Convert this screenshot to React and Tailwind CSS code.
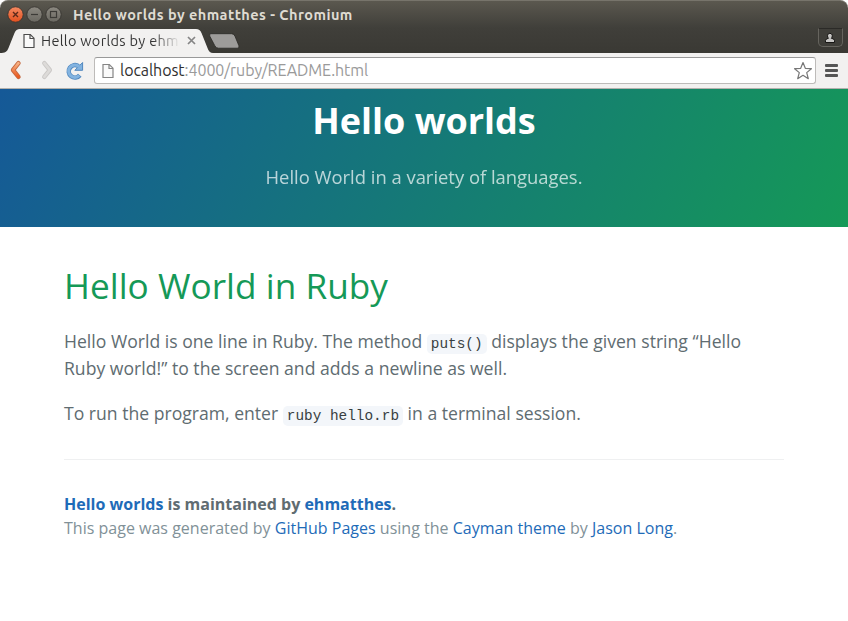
import React from "react";

const uiFont = "font-['Ubuntu','Noto_Sans',sans-serif]";

function WindowButton({ close, children }) {
  return (
    <svg width="17" height="18" viewBox="0 0 17 18" className="shrink-0">
      <defs>
        <linearGradient id="closeFill" x1="0" y1="0" x2="0" y2="1">
          <stop offset="0" stopColor="#f58a62" />
          <stop offset="1" stopColor="#e2501f" />
        </linearGradient>
        <linearGradient id="grayFill" x1="0" y1="0" x2="0" y2="1">
          <stop offset="0" stopColor="#8c8981" />
          <stop offset="1" stopColor="#6a6861" />
        </linearGradient>
      </defs>
      <circle cx="8.5" cy="8.5" r="7.7" fill={close ? "url(#closeFill)" : "url(#grayFill)"} stroke="#33312d" strokeWidth="0.8" />
      {children}
    </svg>
  );
}

function TitleBar() {
  return (
    <div className="flex h-7 items-center rounded-t-lg border-t border-[#77746b] bg-linear-to-b from-[#5b584f] to-[#403f3a] pl-[7px]">
      <div className="flex gap-[2px]">
        <WindowButton close>
          <path d="M6 6l5 5M11 6l-5 5" stroke="#5b291a" strokeWidth="1.4" />
        </WindowButton>
        <WindowButton>
          <path d="M5 8.500h7" stroke="#3c3b37" strokeWidth="1.2" />
        </WindowButton>
        <WindowButton>
          <rect x="5.5" y="5.5" width="6" height="6" fill="none" stroke="#3c3b37" strokeWidth="1.2" />
        </WindowButton>
      </div>
      <h1 className="ml-[11px] whitespace-nowrap text-[14.5px] leading-7 font-bold tracking-[0.45px] text-[#dfdbd2]">
        Hello worlds by ehmatthes - Chromium
      </h1>
    </div>
  );
}

function PageIcon({ color }) {
  return (
    <svg width="12" height="16" viewBox="0 0 12 16" className="shrink-0">
      <path d="M1 1.5h6.3L11 5.2v9.3H1z" fill="#fafafa" stroke={color} strokeWidth="1.2" />
      <path d="M7 1.5v4h4" fill="none" stroke={color} strokeWidth="1.2" />
    </svg>
  );
}

function TabStrip() {
  return (
    <div className="flex h-[25px] bg-linear-to-b from-[#403f3a] to-[#3a3934]">
      <div className="relative flex h-[25px] w-[216px] items-center pl-[23px]">
        <svg className="absolute inset-0" width="216" height="25" viewBox="0 0 216 25">
          <path d="M0 25C5 25 7 24 8.500 20L14.500 5Q16 1 20 1H196Q200 1 201.500 5L207.500 20Q209 25 213 25Z" fill="#f2f1f0" />
        </svg>
        <div className="relative flex items-center">
          <PageIcon color="#4c4c4c" />
          <span className="ml-[6px] h-[22px] w-[139px] overflow-hidden whitespace-nowrap bg-linear-to-r from-[#333] from-80% to-[#f2f1f0] bg-clip-text text-[14.5px] leading-[22px] tracking-[0.3px] text-transparent">
            Hello worlds by ehm
          </span>
          <svg width="9" height="9" viewBox="0 0 9 9" className="ml-[7px]">
            <path d="M1 1l7 7M8 1l-7 7" stroke="#858585" strokeWidth="1.7" />
          </svg>
        </div>
      </div>
      <svg width="33" height="25" viewBox="0 0 33 25" className="-ml-[8px]">
        <path d="M3 5.700H23.500Q26 5.700 27 8.200L30.800 17.500Q31.800 20.200 29.300 20.200H12Q9.500 20.200 8.300 17.700L1.500 8.200Q.8 5.700 3 5.700Z" fill="none" />
        <path d="M3 5.700H23.500Q26 5.700 27 8.200L30.800 17.500Q31.800 20.200 29.300 20.200H10.500Q8 20.200 6.800 17.700L1.800 8.200Q.8 5.700 3 5.700Z" fill="#9d9c9a" stroke="#292825" strokeWidth=".8" />
      </svg>
      <div className="mr-[5px] ml-auto flex h-[19px] w-[25px] justify-center rounded-b-[5px] border border-[#66645e] border-t-[#2b2a27] bg-[#3f3e39] pt-[3px]">
        <svg width="12" height="12" viewBox="0 0 12 12" className="-ml-px">
          <path d="M1.500 10.500V8.500Q2 6.500 4.500 6.300Q3.500 5.500 3.500 3.700A2.400 2.400 0 0 1 8.300 3.700Q8.300 5.500 7.300 6.300Q10 6.500 10.500 8.500V10.500Z" fill="#c8c7c5" stroke="#171614" strokeWidth="1" />
        </svg>
      </div>
    </div>
  );
}

function Toolbar() {
  return (
    <div className="flex h-9 items-center border-b border-[#b3b1ad] bg-[#f2f1f0] pl-[9px]">
      <svg width="13" height="20" viewBox="0 0 13 20" className="-mt-[2px]">
        <defs>
          <linearGradient id="backFill" x1="0" y1="0" x2="0" y2="1">
            <stop offset="0" stopColor="#f8b183" />
            <stop offset="1" stopColor="#ea5a20" />
          </linearGradient>
        </defs>
        <path d="M9.500 3.200L4 10l5.500 6.800" fill="none" stroke="#c4683f" strokeWidth="4.400" strokeLinecap="round" strokeLinejoin="round" />
        <path d="M9.500 3.200L4 10l5.500 6.800" fill="none" stroke="url(#backFill)" strokeWidth="2.700" strokeLinecap="round" strokeLinejoin="round" />
      </svg>
      <svg width="13" height="20" viewBox="0 0 13 20" className="-mt-[2px] ml-[18px]">
        <path d="M4.300 3.200l5.500 6.800-5.500 6.800" fill="none" stroke="#cac8c6" strokeWidth="4.400" strokeLinecap="round" strokeLinejoin="round" />
        <path d="M4.300 3.200l5.500 6.800-5.500 6.800" fill="none" stroke="#dddbd9" strokeWidth="2.700" strokeLinecap="round" strokeLinejoin="round" />
      </svg>
      <svg width="20" height="20" viewBox="0 0 20 20" className="ml-[12px]">
        <path d="M13.500 5.200A6.200 6.200 0 1 0 14.800 14.200" fill="none" stroke="#5288be" strokeWidth="4.600" />
        <path d="M17.600 1.500V9.300H9.800Z" fill="#82b3e0" stroke="#5288be" strokeWidth="1" strokeLinejoin="round" />
        <path d="M14 5.600A6.200 6.200 0 1 0 14.300 14.500" fill="none" stroke="#82b3e0" strokeWidth="3" />
      </svg>
      <div className="ml-[9px] flex h-[27px] w-[722px] items-center rounded-[3px] border border-[#bdbbb9] border-t-[#999] bg-white pl-[7px]">
        <PageIcon color="#858585" />
        <span className="-mt-[2px] ml-[6px] whitespace-nowrap text-[16px] leading-6 tracking-[-0.06px] text-[#9a9a9a]">
          <span className="text-[#303030]">localhost</span>:4000/ruby/README.html
        </span>
        <svg width="20" height="20" viewBox="0 0 20 20" className="mr-[2px] ml-auto">
          <path d="M10 1.500L12.300 7.300L18.400 7.700L13.700 11.600L15.300 17.700L10 14.300L4.700 17.700L6.300 11.600L1.600 7.700L7.700 7.300Z" fill="white" stroke="#777" strokeWidth="1.200" strokeLinejoin="round" />
        </svg>
      </div>
      <div className="ml-[9px] flex flex-col gap-[2px]">
        <span className="h-[3px] w-[13px] rounded-[1px] bg-[#555]" />
        <span className="h-[3px] w-[13px] rounded-[1px] bg-[#555]" />
        <span className="h-[3px] w-[13px] rounded-[1px] bg-[#555]" />
      </div>
    </div>
  );
}

function Link({ children }) {
  return <a className="text-[#1e6bb8]">{children}</a>;
}

function Code({ children }) {
  return (
    <code className="rounded-[4.8px] bg-[#f3f6fa] px-1 py-0.5 font-['Liberation_Mono',monospace] text-[14.4px] leading-none tracking-normal text-[#383e41]">
      {children}
    </code>
  );
}

export default function App() {
  return (
    <div className="h-[621px] w-[848px] overflow-hidden bg-white">
      <div className={uiFont}>
        <TitleBar />
        <TabStrip />
        <Toolbar />
      </div>
      <div className="font-['Open_Sans',sans-serif]">
        <header className="h-[138px] bg-[linear-gradient(120deg,#155799,#159957)] bg-[length:100%_181px] bg-bottom pt-[5px] text-center text-white">
          <h1 className="text-[36px] leading-[54px] font-bold">Hello worlds</h1>
          <h2 className="mt-[15px] text-[18.4px] leading-[27.6px] font-normal opacity-70">
            Hello World in a variety of languages.
          </h2>
        </header>
        <main className="px-16 pt-8 text-[17.6px] leading-[27px] tracking-[0.01px] text-[#606c71]">
          <h1 className="text-[35.2px] leading-[53px] tracking-[0.03px] text-[#159957]">Hello World in Ruby</h1>
          <p className="mt-4">
            Hello World is one line in Ruby. The method <Code>puts()</Code> displays the given string “Hello Ruby world!” to the screen and adds a newline as well.
          </p>
          <p className="mt-[18px] tracking-normal">
            To run the program, enter <Code>ruby hello.rb</Code> in a terminal session.
          </p>
          <footer className="mt-[32px] border-t border-[#eff0f1] pt-8 text-[16px] leading-6 text-[#819198]">
            <p className="font-bold tracking-normal text-[#606c71]">
              <Link>Hello worlds</Link> is maintained by <Link>ehmatthes</Link>.
            </p>
            <p>
              This page was generated by <Link>GitHub Pages</Link> using the <Link>Cayman theme</Link> by <Link>Jason Long</Link>.
            </p>
          </footer>
        </main>
      </div>
    </div>
  );
}
